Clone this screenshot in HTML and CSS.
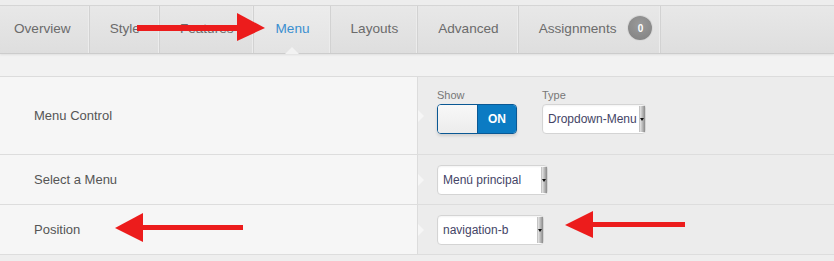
FILE: index.html
```html
<!DOCTYPE html>
<html lang="en">
<head>
  <meta charset="UTF-8" />
  <title>Menu settings</title>
  <link rel="stylesheet" href="styles.css">
</head>
<body>

  <div class="top-strip"></div>

  <!-- Tabs -->
  <ul class="tabs">
    <li class="tab first">Overview</li>
    <li class="tab">Style</li>
    <li class="tab">Features</li>
    <li class="tab active">Menu</li>
    <li class="tab">Layouts</li>
    <li class="tab">Advanced</li>
    <li class="tab last">Assignments <span class="badge">0</span></li>
  </ul>

  <div class="sub-strip"></div>

  <!-- Settings -->
  <div class="settings">
    <div class="row row-tall">
      <div class="label">Menu Control</div>
      <div class="control">
        <div class="field">
          <span class="field-title">Show</span>
          <div class="toggle">
            <span class="toggle-off"></span>
            <span class="toggle-on">ON</span>
          </div>
        </div>
        <div class="field">
          <span class="field-title">Type</span>
          <div class="select">Dropdown-Menu<span class="arrow"></span></div>
        </div>
      </div>
    </div>

    <div class="row">
      <div class="label">Select a Menu</div>
      <div class="control">
        <div class="select wide">Menú principal<span class="arrow"></span></div>
      </div>
    </div>

    <div class="row">
      <div class="label">Position</div>
      <div class="control">
        <div class="select nav">navigation-b<span class="arrow"></span></div>
      </div>
    </div>
  </div>

  <!-- Flechas rojas -->
  <svg class="arrows" width="834" height="261" viewBox="0 0 834 261">
    <rect x="137" y="25" width="102" height="6" fill="#ec1c1c"/>
    <polygon points="237,13 265,28 237,41" fill="#ec1c1c"/>
    <rect x="140" y="225" width="103" height="5" fill="#ec1c1c"/>
    <polygon points="115,228 143,213 143,242" fill="#ec1c1c"/>
    <rect x="590" y="222" width="95" height="5" fill="#ec1c1c"/>
    <polygon points="565,225 593,211 593,238" fill="#ec1c1c"/>
  </svg>

</body>
</html>
```

FILE: styles.css
```css
/* Base */
body {
  margin: 0;
  background: #eeeeee;
  font-family: "Liberation Sans", Arial, sans-serif;
  position: relative;
  width: 834px;
  height: 261px;
  overflow: hidden;
}

.top-strip {
  height: 5px;
  background: #ededed;
  border-bottom: 1px solid #d6d6d6;
}

/* Tabs */
.tabs {
  list-style: none;
  margin: 0;
  padding: 0;
  display: flex;
  height: 47px;
  background: linear-gradient(#e8e8e8, #dedede);
  border-bottom: 1px solid #cccccc;
  box-shadow: 0 1px 2px rgba(0,0,0,0.08);
  position: relative;
  z-index: 1;
}

.tab {
  display: flex;
  align-items: center;
  padding: 0 19px 3px 20px;
  font-size: 13.6px;
  color: #6b6b6b;
  border-right: 1px solid #d2d2d2;
  box-shadow: inset -1px 0 0 #ececec;
  position: relative;
}

.tab.first {
  padding-left: 14px;
  padding-right: 18px;
}

.tab.active {
  color: #3a8fd0;
  background: linear-gradient(#ececec, #e3e3e3);
  padding: 0 20px 3px 22px;
}

.tab.last {
  padding-right: 8px;
}

.tab.active::after {
  content: "";
  position: absolute;
  left: 50%;
  bottom: -1px;
  margin-left: -7px;
  border: 7px solid transparent;
  border-bottom-color: #f2f2f2;
  border-top: 0;
}

.badge {
  display: inline-flex;
  align-items: center;
  justify-content: center;
  width: 24px;
  height: 24px;
  margin-left: 12px;
  border-radius: 50%;
  background: radial-gradient(circle at 50% 35%, #9a9a9a, #808080);
  box-shadow: 0 0 0 1px #d8d8d8;
  color: #fff;
  font-size: 10px;
  font-weight: bold;
}

.sub-strip {
  height: 22px;
  background: #f2f2f2;
  border-bottom: 1px solid #dcdcdc;
}

/* Filas */
.row {
  display: grid;
  grid-template-columns: 418px 1fr;
  height: 49px;
  border-bottom: 1px solid #dddddd;
}

.row-tall {
  height: 77px;
}

.label {
  display: flex;
  align-items: center;
  padding: 0 0 1px 34px;
  font-size: 13px;
  color: #555555;
  background: #f6f6f6;
  border-right: 1px solid #dcdcdc;
  position: relative;
}

.label::after {
  content: "";
  position: absolute;
  right: -7px;
  top: 50%;
  margin-top: -6px;
  border: 6px solid transparent;
  border-left-color: #f6f6f6;
  border-right: 0;
}

.control {
  display: flex;
  align-items: center;
  gap: 25px;
  padding-left: 19px;
  background: #ececec;
}

.row-tall .control {
  align-items: flex-start;
  padding-top: 12px;
}

.field {
  display: flex;
  flex-direction: column;
  gap: 3px;
}

.field-title {
  font-size: 11px;
  color: #777777;
  line-height: 12px;
}

/* Interruptor */
.toggle {
  display: flex;
  width: 78px;
  height: 28px;
  border: 1px solid #0a5894;
  border-radius: 4px;
  overflow: hidden;
  box-shadow: 0 2px 3px rgba(0,0,0,0.12);
}

.toggle-off {
  width: 39px;
  background: linear-gradient(#f8f8f8, #ececec);
  border-right: 1px solid #0a5894;
}

.toggle-on {
  flex: 1;
  display: flex;
  align-items: center;
  justify-content: center;
  background: #0b7bc3;
  color: #ffffff;
  font-size: 12px;
  font-weight: bold;
}

/* Desplegables */
.select {
  position: relative;
  display: flex;
  align-items: center;
  height: 28px;
  width: 97px;
  padding-left: 5px;
  background: #ffffff;
  border: 1px solid #d4d4d4;
  border-radius: 4px;
  font-size: 12px;
  color: #444466;
  box-shadow: inset 0 1px 2px rgba(0,0,0,0.05);
}

.select.wide {
  width: 104px;
}

.select.nav {
  width: 100px;
}

.arrow {
  position: absolute;
  right: 0;
  top: 1px;
  bottom: 1px;
  width: 5px;
  background: linear-gradient(90deg, #e6e6e6, #8a8a8a);
  border-left: 1px solid #c4c4c4;
}

.arrow::after {
  content: "";
  position: absolute;
  left: 0;
  top: 50%;
  margin-top: -1px;
  border: 2px solid transparent;
  border-top: 3px solid #111;
  border-bottom: 0;
}

/* Flechas */
.arrows {
  position: absolute;
  left: 0;
  top: 0;
  pointer-events: none;
  z-index: 5;
}
```
